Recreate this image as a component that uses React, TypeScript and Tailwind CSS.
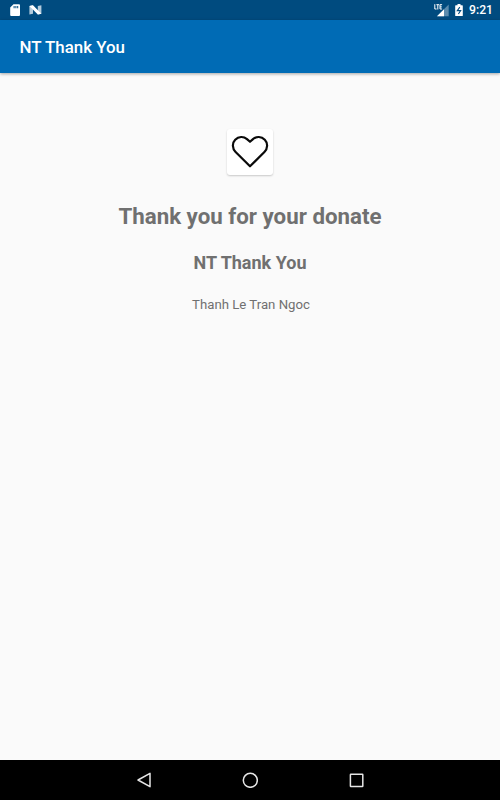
import React from "react";

const StatusBar = () => {
  return (
    <div className="flex h-5 items-center justify-between bg-[#004b7f] pl-[10px] pr-[7px] text-white">
      <div className="flex items-center gap-2">
        {/* SD card */}
        <svg width="11" height="13" viewBox="0 0 11 13">
          <path
            fillRule="evenodd"
            fill="#fff"
            d="M3.5 .3H9Q10 .3 10 1.3V11Q10 12 9 12H1.2Q.2 12 .2 11V3.6ZM3.6 2V4.2H4.6V2ZM5.4 2V4.2H6.4V2ZM7.2 2V4.2H8.2V2Z"
          />
        </svg>
        {/* Android N */}
        <svg width="13" height="10" viewBox="0 0 13 10">
          <path d="M.4 1L4 .2V8.8L.4 9.6Z" fill="#b3cbdc" />
          <path d="M8.8 1L12.4 .2V8.8L8.8 9.6Z" fill="#b3cbdc" />
          <path d="M.4 1L4 .2L12.4 8.8L8.8 9.6Z" fill="#fff" />
        </svg>
      </div>

      <div className="flex items-center">
        {/* Signal strength */}
        <svg width="15" height="13" viewBox="0 0 15 13" className="mr-[6px]">
          <path d="M14.7 .5V12.2H3Z" fill="#5c8cae" />
          <path d="M10 5.2V12.2H3Z" fill="#fff" />
          <path d="M0 0H8.6V6.2H0Z" fill="#004b7f" />
          <path
            d="M.8 .2V5H2.6M2.4 .7H5.2M3.8 .7V5.5M8.1 .7H6V5H8.1M6 2.9H7.8"
            stroke="#fff"
            fill="none"
          />
        </svg>
        {/* Battery */}
        <svg width="8" height="13" viewBox="0 0 8 13" className="mr-[6px]">
          <path
            d="M2.5 0H5.5V1.2H7.2Q7.8 1.2 7.8 1.8V11.4Q7.8 12 7.2 12H.8Q.2 12 .2 11.4V1.8Q.2 1.2 .8 1.2H2.5Z"
            fill="#fff"
          />
          <path d="M4.8 3.2L2.3 6.6H5.7L3.4 10" fill="none" stroke="#004b7f" strokeWidth="1.1" />
        </svg>
        <span className="text-[12.2px] leading-5 font-medium">9:21</span>
      </div>
    </div>
  );
};

const HeartCard = () => {
  return (
    <div className="flex h-[46px] w-[46px] items-center justify-center rounded-[3px] bg-white shadow-[0_1px_2px_rgba(0,0,0,0.2)]">
      <svg width="38" height="34" viewBox="0 0 38 34">
        <path
          d="M19 31.3L4.6 17C1.1 13.4 1 8 4.2 4.7C7.6 1.2 12.6 1.2 16 4.1L19 6.8L22 4.1C25.4 1.2 30.4 1.2 33.8 4.7C37 8 36.9 13.4 33.4 17Z"
          fill="none"
          stroke="#0a0a0a"
          strokeWidth="2.2"
          strokeLinejoin="round"
        />
      </svg>
    </div>
  );
};

const NavigationBar = () => {
  return (
    <div className="flex h-10 items-center justify-center gap-[90px] bg-black">
      <svg width="16" height="16" viewBox="0 0 16 16">
        <path
          d="M14 1.3V14.7L2 8Z"
          fill="none"
          stroke="#e6e6e6"
          strokeWidth="1.5"
          strokeLinejoin="round"
        />
      </svg>
      <svg width="16" height="16" viewBox="0 0 16 16">
        <circle cx="8.3" cy="8.3" r="7" fill="none" stroke="#e6e6e6" strokeWidth="1.5" />
      </svg>
      <svg width="16" height="16" viewBox="0 0 16 16">
        <rect x="2.4" y="2.2" width="12.4" height="12.4" rx="0.5" fill="none" stroke="#e6e6e6" strokeWidth="1.5" />
      </svg>
    </div>
  );
};

const App = () => {
  return (
    <div className="flex h-screen flex-col bg-[#fafafa] font-['Roboto',sans-serif]">
      <StatusBar />
      <header className="flex h-[53px] items-center bg-[#006bb5] px-[19.5px] pt-[2px] shadow-[0_1px_3px_rgba(0,0,0,0.35)]">
        <h1 className="text-[16.9px] font-medium text-white">NT Thank You</h1>
      </header>

      <main className="flex flex-1 flex-col items-center pt-[56px] text-[#707070]">
        <HeartCard />
        <h2 className="mt-[26px] text-[22.3px] leading-[30px] font-bold">
          Thank you for your donate
        </h2>
        <h3 className="mt-[20px] text-[18px] leading-6 font-bold">NT Thank You</h3>
        <p className="mt-[20px] pl-[2px] text-[13.2px] leading-5">Thanh Le Tran Ngoc</p>
      </main>

      <NavigationBar />
    </div>
  );
};

export default App;
